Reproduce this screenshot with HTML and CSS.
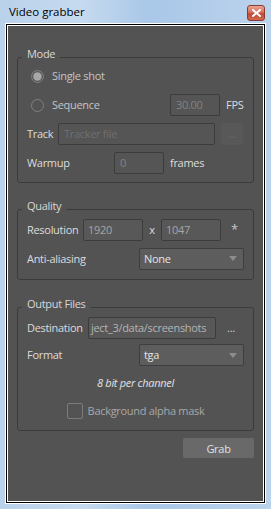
FILE: index.html
```html
<!DOCTYPE html>
<html lang="en">
<head>
    <meta charset="UTF-8">
    <meta name="viewport" content="width=device-width, initial-scale=1.0">
    <title>Video grabber</title>
    <link rel="stylesheet" href="styles.css">
</head>
<body>
    <div class="window">
        <div class="titlebar">
            <span class="title">Video grabber</span>
            <span class="close-btn">
                <svg width="9" height="8" viewBox="0 0 9 8">
                    <path d="M1 1 L8 7 M8 1 L1 7" stroke="#fff" stroke-width="2" stroke-linecap="square"/>
                </svg>
            </span>
        </div>

        <div class="panel">
            <div class="group group-mode">
                <span class="group-title">Mode</span>
                <div class="row">
                    <span class="radio checked"></span>
                    <span class="radio-label">Single shot</span>
                </div>
                <div class="row">
                    <span class="radio"></span>
                    <span class="radio-label">Sequence</span>
                    <span class="field field-fps disabled">30.00</span>
                    <span class="unit">FPS</span>
                </div>
                <div class="row">
                    <span class="label label-track">Track</span>
                    <span class="field field-track placeholder">Tracker file</span>
                    <span class="browse-btn disabled">...</span>
                </div>
                <div class="row">
                    <span class="label label-warmup">Warmup</span>
                    <span class="field field-warmup disabled">0</span>
                    <span class="unit">frames</span>
                </div>
            </div>

            <div class="group group-quality">
                <span class="group-title">Quality</span>
                <div class="row">
                    <span class="label label-res">Resolution</span>
                    <span class="field field-res">1920</span>
                    <span class="times">x</span>
                    <span class="field field-res">1047</span>
                    <span class="asterisk">*</span>
                </div>
                <div class="row row-second">
                    <span class="label label-wide">Anti-aliasing</span>
                    <span class="select">None<span class="arrow"></span></span>
                </div>
            </div>

            <div class="group group-output">
                <span class="group-title">Output Files</span>
                <div class="row">
                    <span class="label label-dest">Destination</span>
                    <span class="field field-dest">ject_3/data/screenshots</span>
                    <span class="browse-btn">...</span>
                </div>
                <div class="row row-format">
                    <span class="label label-wide">Format</span>
                    <span class="select">tga<span class="arrow"></span></span>
                </div>
                <div class="info">8 bit per channel</div>
                <div class="check-row">
                    <span class="checkbox"></span>
                    <span class="check-label">Background alpha mask</span>
                </div>
            </div>

            <div class="actions">
                <span class="grab-btn">Grab</span>
            </div>
        </div>
    </div>
</body>
</html>
```

FILE: styles.css
```css
body {
    margin: 0;
    font-family: "Open Sans", "Noto Sans", sans-serif;
    font-size: 11px;
}

.window {
    width: 271px;
    height: 509px;
    box-sizing: border-box;
    padding: 25px 7px 7px 7px;
    background: linear-gradient(90deg, #b9d1ea 0%, #c6daef 30%, #a9c7e8 55%, #bcd3ec 100%);  /* win7 basic frame */
    position: relative;
}

.titlebar {
    position: absolute;
    top: 0;
    left: 0;
    right: 0;
    height: 23px;
    display: flex;
    align-items: flex-start;
    justify-content: space-between;
}

.title {
    margin: 5px 0 0 9px;
    color: #000;
    font-size: 11.5px;
    line-height: 14px;
}

.close-btn {
    margin: 5px 6px 0 0;
    width: 18px;
    height: 16px;
    box-sizing: border-box;
    border: 1px solid #8c3a30;
    border-radius: 3px;
    background: linear-gradient(180deg, #e8a595 0%, #d8705c 45%, #c24a35 55%, #d0684f 100%);
    display: flex;
    align-items: center;
    justify-content: center;
}

.panel {
    height: 477px;
    box-sizing: border-box;
    border: 1px solid #fff;
    box-shadow: 0 0 0 1px #000, 0 0 0 2px #fff;
    background-color: #535353;
    padding: 31px 9px 0 9px;
    display: flex;
    flex-direction: column;
    color: #dcdcdc;
    letter-spacing: -0.3px;  /* narrower, closer to Segoe UI */
}

.group {
    position: relative;
    border: 1px solid #3b3b3b;
    border-radius: 3px;
    padding: 9px 9px 9px 9px;
    display: flex;
    flex-direction: column;
    gap: 6px;
}

.group-mode {
    padding-top: 7px;
    padding-bottom: 8px;
    gap: 7px;
}

.group-quality {
    margin-top: 26px;
}

.group-output {
    margin-top: 27px;
    gap: 5px;
    padding-bottom: 11px;
}

.group-title {
    position: absolute;
    top: -11px;
    left: 4px;
    padding: 0 5px;
    line-height: 14px;
    background-color: #535353;
    color: #d8d8d8;
}

.row {
    display: flex;
    align-items: center;
    height: 22px;
    line-height: 14px;
}

.radio {
    width: 13px;
    height: 13px;
    margin-left: 4px;
    box-sizing: border-box;
    border: 1px solid #808080;
    border-radius: 50%;
}

.radio.checked {
    background: radial-gradient(circle, #a8a8a8 0 3.6px, #6e6e6e 4.4px, #5a5a5a 5px);
}

.radio-label {
    margin-left: 8px;
    width: 118px;
    color: #c4c4c4;
}

.field {
    height: 22px;
    box-sizing: border-box;
    border: 1px solid #3c3c3c;
    border-radius: 2px;
    background-color: #585858;
    padding-left: 4px;
    display: flex;
    align-items: center;
    color: #a6a6a6;
    white-space: nowrap;
    overflow: hidden;
}

.field.disabled {
    color: #838383;
    background-color: #555;
}

.field.placeholder {
    color: #6f6f6f;
    background-color: #555;
}

.field-fps {
    width: 50px;
    padding-left: 5px;
}

.unit {
    margin-left: 6px;
    color: #dcdcdc;
}

.label {
    color: #dcdcdc;
}

.label-track { width: 31px; }
.label-warmup { width: 87px; }
.label-res { width: 56px; }
.label-dest { width: 61px; }
.label-wide { width: 112px; }

.field-track {
    width: 157px;
    padding-left: 5px;
}

.field-warmup {
    width: 50px;
    padding-left: 5px;
}

.field-res {
    width: 60px;
}

.field-dest {
    width: 128px;
    padding-left: 2px;
    color: #b4b4b4;
}

.browse-btn {
    margin-left: 4px;
    width: 22px;
    height: 22px;
    border-radius: 2px;
    display: flex;
    align-items: center;
    justify-content: center;
    color: #d0d0d0;
    line-height: 14px;
}

.browse-btn.disabled {
    margin-left: 6px;
    background-color: #585858;
    color: #707070;
}

.times {
    width: 18px;
    text-align: center;
}

.asterisk {
    margin-left: 10px;
    margin-bottom: 3px;
    font-size: 13px;
    color: #c8c8c8;
}

.select {
    width: 105px;
    height: 22px;
    box-sizing: border-box;
    border: 1px solid #3e3e3e;
    border-radius: 2px;
    background-color: #5d5d5d;
    padding: 0 6px 0 4px;
    display: flex;
    align-items: center;
    justify-content: space-between;
    color: #e4e4e4;
}

.arrow {
    width: 0;
    height: 0;
    border-left: 4px solid transparent;
    border-right: 4px solid transparent;
    border-top: 5px solid #8c8c8c;
}

.row-second {
    height: 23px;
}

.info {
    margin-top: 5px;
    line-height: 14px;
    text-align: center;
    font-style: italic;
    color: #e2e2e2;
}

.check-row {
    margin-top: 8px;
    display: flex;
    align-items: center;
    justify-content: center;
    height: 16px;
}

.checkbox {
    width: 16px;
    height: 16px;
    box-sizing: border-box;
    border: 1px solid #7c7c7c;
    border-radius: 2px;
}

.check-label {
    margin-left: 5px;
    color: #a8a8a8;
    line-height: 14px;
}

.actions {
    margin-top: 7px;
    display: flex;
    justify-content: flex-end;
}

.grab-btn {
    width: 71px;
    height: 20px;
    border-radius: 2px;
    background-color: #696969;
    color: #e0e0e0;
    display: flex;
    align-items: center;
    justify-content: center;
}
```
